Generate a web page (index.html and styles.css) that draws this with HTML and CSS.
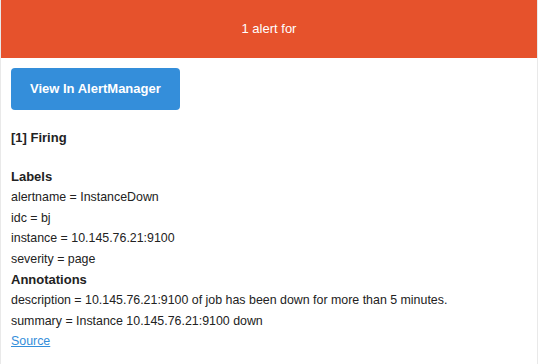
FILE: index.html
```html
<!DOCTYPE html>
<html lang="en">
<head>
    <meta charset="UTF-8">
    <title>1 alert for</title>
    <link rel="stylesheet" href="styles.css">
</head>
<body>
    <div class="main">
        <div class="alert alert-warning">1 alert for</div>
        <div class="content-wrap">
            <div class="content-block btn-block">
                <a href="#" class="btn-primary">View In AlertManager</a>
            </div>
            <div class="content-block firing-block">
                <strong>[1] Firing</strong>
            </div>
            <div class="content-block alert-details">
                <strong>Labels</strong><br>
                alertname = InstanceDown<br>
                idc = bj<br>
                instance = 10.145.76.21:9100<br>
                severity = page<br>
                <strong>Annotations</strong><br>
                description = 10.145.76.21:9100 of job has been down for more than 5 minutes.<br>
                summary = Instance 10.145.76.21:9100 down<br>
                <a href="#" class="source">Source</a><br>
            </div>
        </div>
    </div>
</body>
</html>
```

FILE: styles.css
```css
body {
    margin: 0;
    font-family: "Liberation Sans", Arial, sans-serif;
    font-size: 13px;
    color: #222;
    background: #fff;
}
.main {
    border: 1px solid #e9e9e9;
    border-top: none;
    min-height: 380px;
}
.alert {
    color: #fff;
    font-size: 13px;
    line-height: 18px;
    padding: 20px;
    text-align: center;
}
.alert-warning {
    background-color: #e6522c;
}
.content-wrap {
    padding: 10px;
    line-height: 20.6px;
}
.content-block {
    padding: 0 0 18px;
}
.btn-block {
    display: flex;
    padding-bottom: 19px;
}
.btn-primary {
    display: inline-block;
    height: 42px;
    line-height: 42px;
    padding: 0 19px;
    background-color: #348eda;
    color: #fff;
    font-weight: bold;
    text-decoration: none;
    border-radius: 4px;
}
.firing-block {
    margin-top: -1px;
}
.alert-details {
    font-size: 12.4px;
}
.alert-details strong {
    font-size: 13px;
}
.source {
    color: #348eda;
}
```
